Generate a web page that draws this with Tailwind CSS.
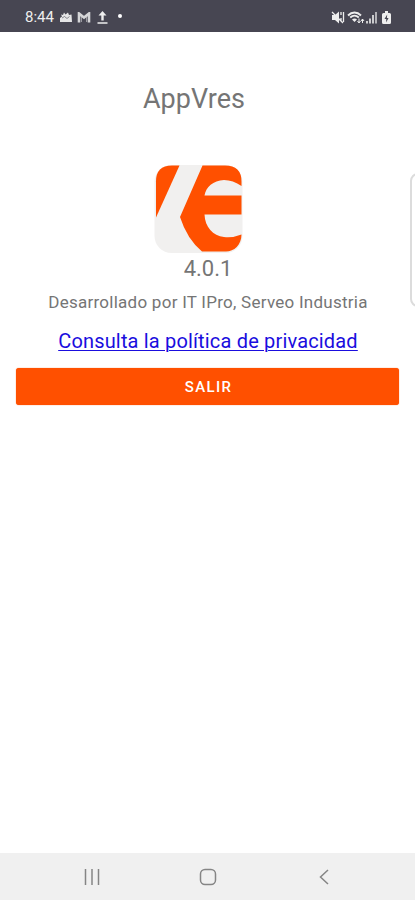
<!DOCTYPE html>
<html lang="es">
<head>
    <meta charset="UTF-8">
    <meta name="viewport" content="width=device-width, initial-scale=1.0">
    <title>AppVres</title>
    <script src="https://cdn.jsdelivr.net/npm/@tailwindcss/browser@4"></script>
</head>
<body class="bg-white font-['Roboto',sans-serif] text-[#757575]">
    <div class="relative flex flex-col w-[415px] h-[900px] overflow-hidden">
        <!-- Status bar -->
        <header class="flex items-center justify-between h-8 shrink-0 bg-[#474652] pl-[25px] pr-[24px] text-[#eeeeee]">
            <div class="flex items-center h-full">
                <span class="w-[30px] text-[15px] leading-none whitespace-nowrap pt-[3px]">8:44</span>
                <svg class="ml-[5px] mt-0.5" width="12" height="12" viewBox="0 0 12 12" fill="currentColor">
                    <path d="M0 11V7l2-1.500-1-2 2 .5 1-2.500 1.500 2L8 1.500l1 2.500 2.500-.5L12 11z" fill-opacity=".95"/>
                    <path d="M2 7l2.500-1.500L7 7.500 9.500 5.500" fill="none" stroke="#474652" stroke-width=".6"/>
                </svg>
                <svg class="ml-[5px] mt-0.5" width="14" height="11" viewBox="0 0 14 11" fill="none" stroke="currentColor">
                    <path d="M2 10.500V1.500l5 4 5-4v9" stroke-width="2.600" stroke-opacity=".85"/>
                    <path d="M4.500 10V5M9.500 10V5" stroke-opacity=".5"/>
                </svg>
                <svg class="ml-[6px] mt-0.5" width="11" height="13" viewBox="0 0 11 13" fill="currentColor">
                    <path d="M5.500 0l4 4.500H6.700V9.500H4.300V4.500H1.500zM.5 11.300h10v1.500H.5z"/>
                </svg>
                <span class="ml-[10px] size-1 rounded-full bg-white"></span>
            </div>
            <div class="flex items-center h-full">
                <svg class="mt-0.5" width="14" height="13" viewBox="0 0 14 13" fill="currentColor">
                    <path d="M1 4h3l4-3.500v12L4 9H1z"/>
                    <path d="M1 1l11 11M10 1v3M12.500 1v10M10 7v3" stroke="currentColor" stroke-width="1.300"/>
                </svg>
                <svg class="ml-[2px] mt-0.5" width="18" height="13" viewBox="0 0 18 13" fill="none" stroke="currentColor">
                    <path d="M1 4.500C5 .5 10 .5 14 4.500M3.200 6.500c3-2.600 5.600-2.600 8.600 0" stroke-width="1.900"/>
                    <path d="M5 8.500q2.500-2 5 0L7.500 11z" fill="currentColor" stroke="none"/>
                    <path d="M12 7.500v4M10.500 10l1.500 2 1.500-2M15.500 12V8M14 10l1.500-2L17 10"/>
                </svg>
                <svg class="mt-0.5" width="13" height="13" viewBox="0 0 13 13" fill="currentColor">
                    <path d="M1 10h2v2.500H1zM4 7.500h2v5H4zM7 4h2v8.500H7z" fill-opacity=".8"/>
                    <path d="M10 1h2v11.500h-2z" fill-opacity=".65"/>
                </svg>
                <svg class="ml-[4px] mt-0.5" width="9" height="13" viewBox="0 0 9 13" fill="currentColor">
                    <path d="M3 0h3v2h1.500Q9 2 9 3.500v8Q9 13 7.500 13h-6Q0 13 0 11.500v-8Q0 2 1.500 2H3z"/>
                    <path d="M5.200 3.500L2.500 8h1.800L4 11.500 6.600 7H4.900z" fill="#474652"/>
                </svg>
            </div>
        </header>

        <main class="flex flex-col items-center grow px-4">
            <h1 class="mt-[50px] mr-[27px] h-[34px] text-[27px] leading-[34px] tracking-[0.05px]">AppVres</h1>

            <svg class="mt-[48px] mr-[18px]" width="89" height="90" viewBox="0 0 89 90">
                <rect x="0.500" y="1" width="88" height="88" rx="17" fill="#f1f0ef"/>
                <path d="M18 1.500h7.500L2 53.500V17.500Q2 1.500 18 1.500z" fill="#ff5000"/>
                <path d="M48.500 1.500H71Q87.500 1.500 87.500 17.500v4.500Q79 16 70 16C59 16.500 52 23 50.500 31.500h37v19H50.500C51 63 59 72 70 73Q79 74 87.500 70.500C87.500 81 80 87.500 72 87.500H48Q33 75 26 53z" fill="#ff5000"/>
            </svg>

            <p class="mt-[1px] h-7 pl-px text-[22px] leading-7">4.0.1</p>
            <p class="mt-[7px] h-6 pl-px text-[17px] leading-6 tracking-[0.26px] whitespace-nowrap">Desarrollado por IT IPro, Serveo Industria</p>
            <a href="#" class="mt-[13px] h-7 pl-px text-[20px] leading-7 tracking-[0.17px] whitespace-nowrap text-[#1a0dde] underline decoration-1 underline-offset-2">Consulta la política de privacidad</a>
            <button class="mt-[13px] h-[37px] w-[383px] rounded-[3px] bg-[#ff5000] pl-[2px] pt-px text-[15px] font-medium tracking-[1.35px] text-white shadow-[0_0_1px_#ff5000]">SALIR</button>
        </main>

        <!-- Edge panel handle -->
        <div class="absolute left-[410px] top-[173px] h-[134px] w-5 rounded-lg border-2 border-[#dcdcdc] bg-white"></div>

        <!-- Navigation bar -->
        <nav class="flex h-[47px] shrink-0 items-center bg-[#f0f0f0] pl-[84px] text-[#858585]">
            <svg width="16" height="16" viewBox="0 0 16 16" fill="none" stroke="currentColor" stroke-width="1.500">
                <path d="M1.500 0v16M8 0v16M14.500 0v16"/>
            </svg>
            <svg class="ml-[99px]" width="18" height="18" viewBox="0 0 18 18" fill="none" stroke="currentColor" stroke-width="1.500">
                <rect x="1.500" y="1.500" width="15" height="15" rx="4.500"/>
            </svg>
            <svg class="ml-[102px]" width="10" height="16" viewBox="0 0 10 16" fill="none" stroke="currentColor" stroke-width="1.500">
                <path d="M9 1L1.500 8 9 15"/>
            </svg>
        </nav>
    </div>
</body>
</html>
